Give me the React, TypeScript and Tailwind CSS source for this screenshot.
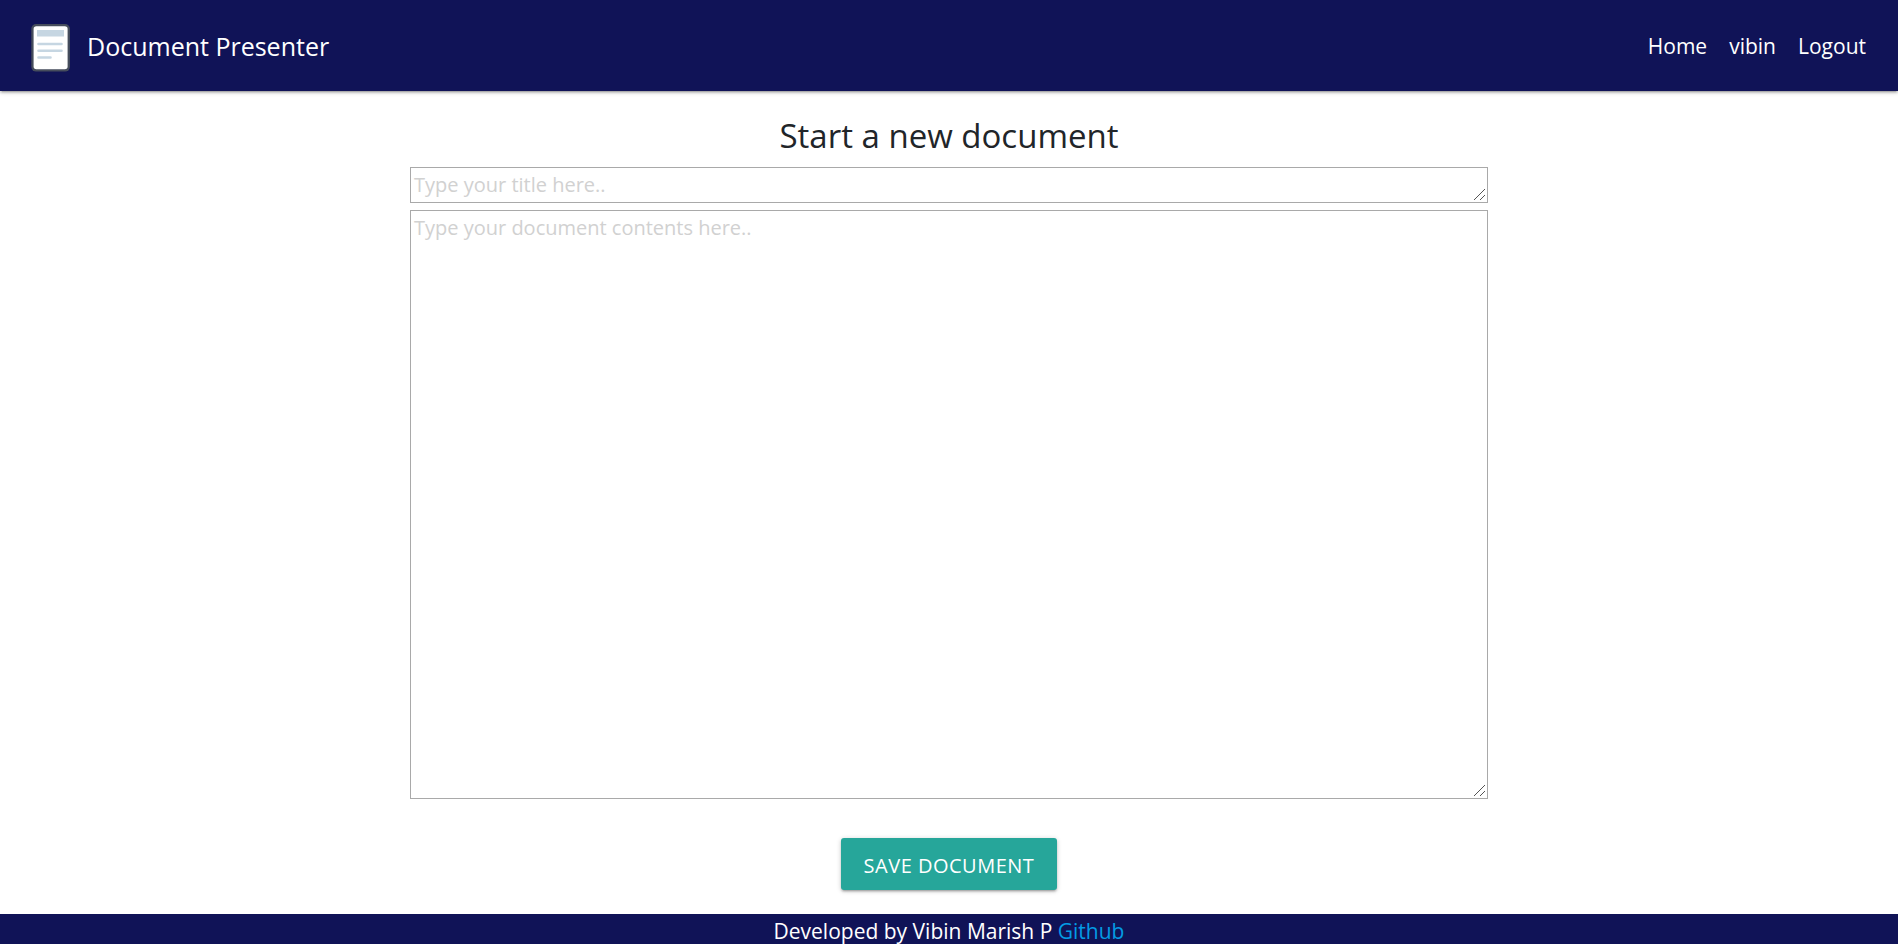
function DocumentIcon() {
  return (
    <svg width="38" height="48" viewBox="0 0 38 48" overflow="visible" aria-hidden="true">
      <rect x="-0.7" y="0" width="38.6" height="47.6" rx="4.8" fill="#464d5c" />
      <rect x="1.600" y="2.300" width="34" height="43" rx="2.800" fill="#ffffff" />
      <rect x="5" y="6" width="27" height="6.5" fill="#c6d6e2" />
      <path d="M6.500 20H29.500M6.500 26.700H29.500M6.500 33.500H18.500" stroke="#c6d6e2" strokeWidth="2.6" strokeLinecap="round" />
    </svg>
  );
}

const field =
  "block w-full resize overflow-auto border border-[#a9a9a9] bg-white px-[3px] text-[20px] leading-[34px] text-[#212529] placeholder:text-[#d1d1d1] placeholder:opacity-100 focus:outline-none [&::-webkit-resizer]:[background:linear-gradient(135deg,transparent_46%,#555_46%,#555_54%,transparent_54%)_2px_2px/11px_11px_no-repeat,linear-gradient(135deg,transparent_42%,#555_42%,#555_58%,transparent_58%)_8px_8px/5px_5px_no-repeat]";

export default function App() {
  return (
    <div className="flex min-h-screen flex-col bg-white font-['Segoe_UI','Open_Sans',sans-serif] text-[#212529]">
      <header className="flex h-[91px] items-center justify-between bg-[#101357] px-8 text-white shadow-[0_2px_2px_0_rgba(0,0,0,0.14),0_3px_1px_-2px_rgba(0,0,0,0.12),0_1px_5px_0_rgba(0,0,0,0.2)]">
        <a href="#" className="flex items-center gap-[17px] text-[25px] leading-9">
          <span className="pt-1"><DocumentIcon /></span>
          Document Presenter
        </a>
        <nav className="flex gap-[22px] text-[21px] leading-8">
          <a href="#">Home</a>
          <a href="#">vibin</a>
          <a href="#">Logout</a>
        </nav>
      </header>
      <main className="flex grow flex-col items-center px-4 pt-5 pb-6">
        <h1 className="pt-[2px] text-[33px] leading-[46px]">Start a new document</h1>
        <form className="flex w-full max-w-[1078px] flex-col items-center pt-2" onSubmit={(e) => e.preventDefault()}>
          <textarea aria-label="Title" placeholder="Type your title here.." rows={1} className={`${field} mb-[7px] h-9`} />
          <textarea aria-label="Document contents" placeholder="Type your document contents here.." className={`${field} h-[589px]`} />
          <button
            type="submit"
            className="mt-[39px] h-[52px] rounded-[3px] bg-[#26a69a] px-[23px] pt-1 text-[20px] tracking-wide text-white uppercase shadow-[0_2px_2px_0_rgba(0,0,0,0.14),0_3px_1px_-2px_rgba(0,0,0,0.12),0_1px_5px_0_rgba(0,0,0,0.2)]"
          >
            Save Document
          </button>
        </form>
      </main>
      <footer className="h-[30px] bg-[#101357] text-center text-[21px] leading-[34px] text-white">
        Developed by Vibin Marish P <a href="#" className="text-[#039be5]">Github</a>
      </footer>
    </div>
  );
}
